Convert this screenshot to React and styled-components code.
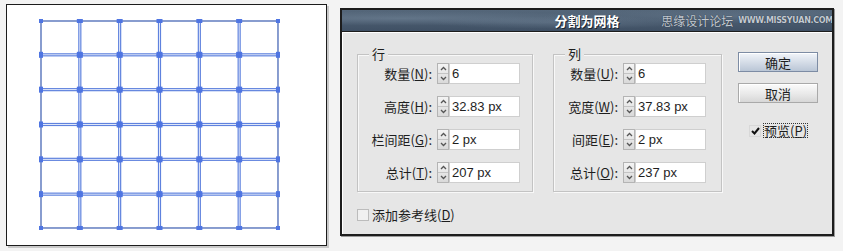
import React from "react";
import styled, { createGlobalStyle } from "styled-components";

const GlobalStyle = createGlobalStyle`
  html, body {
    margin: 0;
    padding: 0;
    background: #f3f3f3;
  }
  body {
    font-family: "Liberation Sans", "Noto Sans CJK SC", sans-serif;
    color: #1e1e1e;
  }
`;

const Page = styled.div`
  display: flex;
  align-items: flex-start;
  width: 843px;
  height: 251px;
`;

const Canvas = styled.div`
  margin: 4px 0 0 6px;
  width: 321px;
  height: 242px;
  box-sizing: border-box;
  border: 1px solid #1c1c1c;
  background: #fff;
  box-shadow: 2px 2px 0 #c9c9c9;
  svg {
    display: block;
  }
`;

const Dialog = styled.div`
  margin: 8px 0 0 13px;
  width: 494px;
  height: 228px;
  box-sizing: border-box;
  border: 2px solid #1d1d1d;
  background: #e6e6e6;
  box-shadow: 1px 1px 0 #9a9a9a;
  display: flex;
  flex-direction: column;
`;

const TitleBar = styled.div`
  position: relative;
  height: 21px;
  border-bottom: 1px solid #1d1d1d;
  background:
    radial-gradient(ellipse at 12% 40%, rgba(140, 160, 180, 0.35), transparent 40%),
    radial-gradient(ellipse at 45% 60%, rgba(130, 150, 170, 0.3), transparent 35%),
    radial-gradient(ellipse at 80% 30%, rgba(120, 140, 160, 0.3), transparent 35%),
    linear-gradient(#55677a, #3f5064);
  display: flex;
  align-items: center;
  justify-content: center;
  overflow: hidden;
`;

const Title = styled.div`
  font-family: "Noto Sans CJK SC", sans-serif;
  font-size: 13px;
  font-weight: bold;
  color: #fff;
  text-shadow: 1px 1px 0 #1a2430;
`;

/* watermark printed over the title bar's right end */
const Watermark = styled.div`
  position: absolute;
  right: -1px;
  top: 0;
  bottom: 0;
  display: flex;
  align-items: center;
  gap: 5px;
  color: #c3cad2;
  text-shadow: 0 0 1px #1a2430;
  white-space: nowrap;
`;

const WmCn = styled.span`
  font-family: "Noto Sans CJK SC", sans-serif;
  font-size: 12px;
`;

const WmEn = styled.span`
  font-family: "DejaVu Sans", sans-serif;
  font-size: 8px;
  font-weight: bold;
  letter-spacing: -0.3px;
`;

const Body = styled.div`
  flex: 1;
  display: flex;
  padding: 15px 0 0 15px;
  box-shadow: inset 1px 1px 0 #fff;
`;

const MainArea = styled.div`
  display: flex;
  flex-direction: column;
`;

const Groups = styled.div`
  display: flex;
  gap: 20px;
  padding-top: 7px;
`;

const Group = styled.div`
  position: relative;
  border: 1px solid #c3c3c3;
  box-shadow: inset 1px 1px 0 #f8f8f8, 1px 1px 0 #f8f8f8;
  padding: 8px ${(p) => p.$padRight}px 8px 0;
  display: flex;
  flex-direction: column;
  gap: 12px;
`;

const Legend = styled.span`
  position: absolute;
  top: -9px;
  left: 11px;
  padding: 0 3px;
  background: #e6e6e6;
  font-family: "Noto Sans CJK SC", sans-serif;
  font-size: 13px;
  line-height: 16px;
`;

const Row = styled.div`
  display: flex;
  align-items: center;
  height: 21px;
`;

const Label = styled.label`
  width: ${(p) => p.$width}px;
  text-align: right;
  font-family: "Noto Sans CJK SC", sans-serif;
  font-size: 13px;
  margin-right: 5px;
  white-space: nowrap;
`;

const Key = styled.span`
  text-decoration: underline;
  text-underline-offset: 1px;
`;

const Spinner = styled.div`
  width: 12px;
  height: 21px;
  box-sizing: border-box;
  border: 1px solid #b4b4b4;
  background: linear-gradient(#f4f4f4, #d9d9d9);
  display: flex;
  flex-direction: column;
  svg {
    display: block;
  }
`;

const SpinHalf = styled.div`
  flex: 1;
  display: flex;
  align-items: center;
  justify-content: center;
  & + & {
    border-top: 1px solid #c4c4c4;
  }
`;

const Field = styled.div`
  width: 71px;
  height: 21px;
  box-sizing: border-box;
  border: 1px solid #cfcfcf;
  background: #fff;
  font-size: 13px;
  line-height: 19px;
  padding-left: 2px;
`;

const CheckRow = styled.div`
  display: flex;
  align-items: center;
  gap: ${(p) => p.$gap || 3}px;
  margin-top: ${(p) => p.$top || 0}px;
  margin-left: ${(p) => p.$left || 0}px;
  font-family: "Noto Sans CJK SC", sans-serif;
  font-size: 13px;
`;

const Box = styled.span`
  width: 12px;
  height: 12px;
  box-sizing: border-box;
  border: 1px solid ${(p) => (p.$checked ? "#d8d8d8" : "#bcbcbc")};
  background: ${(p) => (p.$checked ? "#e6e6e6" : "#f0f0f0")};
  display: flex;
  align-items: center;
  justify-content: center;
`;

const Focus = styled.span`
  outline: 1px dotted #333;
  outline-offset: -1px;
  padding: 0 1px;
  line-height: 15px;
`;

const Buttons = styled.div`
  margin: 5px 0 0 16px;
  display: flex;
  flex-direction: column;
  gap: 11px;
`;

const Button = styled.div`
  width: 80px;
  height: 20px;
  box-sizing: border-box;
  border: 1px solid ${(p) => (p.$primary ? "#7d8ca4" : "#a9a9a9")};
  background: ${(p) =>
    p.$primary
      ? "linear-gradient(#f2f5fa, #d3dbe6 55%, #bac6d6)"
      : "linear-gradient(#fbfbfb, #e9e9e9 55%, #d7d7d7)"};
  box-shadow: inset 1px 1px 0 #fff;
  display: flex;
  align-items: center;
  justify-content: center;
  font-family: "Noto Sans CJK SC", sans-serif;
  font-size: 13px;
`;

const cols = 6;
const rows = 6;
const cellW = 37.83;
const cellH = 32.83;
const gutter = 2;
const originX = 34;
const originY = 16;

function GridDrawing() {
  const rects = [];
  const points = [];
  for (let r = 0; r < rows; r++) {
    for (let c = 0; c < cols; c++) {
      const x = originX + c * (cellW + gutter);
      const y = originY + r * (cellH + gutter);
      rects.push(
        <rect key={`r${r}-${c}`} x={x} y={y} width={cellW} height={cellH} />
      );
      [
        [x, y],
        [x + cellW, y],
        [x, y + cellH],
        [x + cellW, y + cellH],
      ].forEach(([px, py], i) =>
        points.push(
          <rect key={`p${r}-${c}-${i}`} x={px - 2} y={py - 2} width={4} height={4} />
        )
      );
    }
  }
  return (
    <svg width="319" height="240" viewBox="0 0 319 240">
      <g fill="none" stroke="#5f82de" strokeWidth="1.2">
        {rects}
      </g>
      <rect
        x={originX}
        y={originY}
        width={cols * cellW + (cols - 1) * gutter}
        height={rows * cellH + (rows - 1) * gutter}
        fill="none"
        stroke="#7386b4"
        strokeWidth="1"
      />
      <g fill="#4f75e2">{points}</g>
    </svg>
  );
}

const Arrow = ({ up }) => (
  <svg width="7" height="5" viewBox="0 0 7 5">
    <path
      d={up ? "M1 4 L3.5 1.5 L6 4" : "M1 1 L3.5 3.5 L6 1"}
      fill="none"
      stroke="#555"
      strokeWidth="1.3"
    />
  </svg>
);

const SpinField = ({ value }) => (
  <>
    <Spinner>
      <SpinHalf>
        <Arrow up />
      </SpinHalf>
      <SpinHalf>
        <Arrow />
      </SpinHalf>
    </Spinner>
    <Field>{value}</Field>
  </>
);

const rowFields = [
  { label: "数量", key: "N", value: "6" },
  { label: "高度", key: "H", value: "32.83 px" },
  { label: "栏间距", key: "G", value: "2 px" },
  { label: "总计", key: "T", value: "207 px" },
];

const colFields = [
  { label: "数量", key: "U", value: "6" },
  { label: "宽度", key: "W", value: "37.83 px" },
  { label: "间距", key: "E", value: "2 px" },
  { label: "总计", key: "O", value: "237 px" },
];

const FieldGroup = ({ title, fields, labelWidth, padRight }) => (
  <Group $padRight={padRight}>
    <Legend>{title}</Legend>
    {fields.map((f) => (
      <Row key={f.key}>
        <Label $width={labelWidth}>
          {f.label}(<Key>{f.key}</Key>):
        </Label>
        <SpinField value={f.value} />
      </Row>
    ))}
  </Group>
);

const Check = () => (
  <svg width="9" height="8" viewBox="0 0 9 8">
    <path d="M1 4 L3.5 6.5 L8 1" fill="none" stroke="#111" strokeWidth="2" />
  </svg>
);

export default function App() {
  return (
    <>
      <GlobalStyle />
      <Page>
        <Canvas>
          <GridDrawing />
        </Canvas>
        <Dialog>
          <TitleBar>
            <Title>分割为网格</Title>
            <Watermark>
              <WmCn>思缘设计论坛</WmCn>
              <WmEn>WWW.MISSYUAN.COM</WmEn>
            </Watermark>
          </TitleBar>
          <Body>
            <MainArea>
              <Groups>
                <FieldGroup title="行" fields={rowFields} labelWidth={74} padRight={12} />
                <FieldGroup title="列" fields={colFields} labelWidth={64} padRight={15} />
              </Groups>
              <CheckRow $top={13}>
                <Box />
                <span>
                  添加参考线(<Key>D</Key>)
                </span>
              </CheckRow>
            </MainArea>
            <Buttons>
              <Button $primary>确定</Button>
              <Button>取消</Button>
              <CheckRow $top={9} $left={11} $gap={2}>
                <Box $checked>
                  <Check />
                </Box>
                <Focus>
                  预览(<Key>P</Key>)
                </Focus>
              </CheckRow>
            </Buttons>
          </Body>
        </Dialog>
      </Page>
    </>
  );
}
